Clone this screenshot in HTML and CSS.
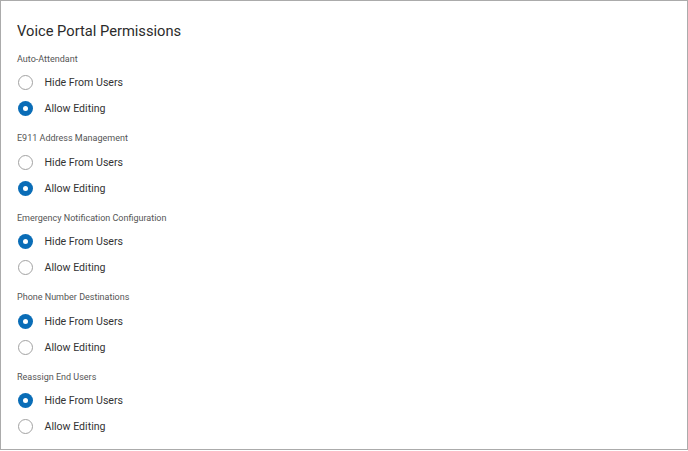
FILE: index.html
```html
<!DOCTYPE html>
<html>
<head>
<meta charset="utf-8">
<link rel="stylesheet" href="styles.css">
</head>
<body>
<div class="panel">
  <h1 class="title">Voice Portal Permissions</h1>

  <div class="section">
    <div class="label">Auto-Attendant</div>
    <div class="option"><span class="radio"></span><span class="text">Hide From Users</span></div>
    <div class="option"><span class="radio checked"></span><span class="text">Allow Editing</span></div>
  </div>

  <div class="section">
    <div class="label">E911 Address Management</div>
    <div class="option"><span class="radio"></span><span class="text">Hide From Users</span></div>
    <div class="option"><span class="radio checked"></span><span class="text">Allow Editing</span></div>
  </div>

  <div class="section">
    <div class="label">Emergency Notification Configuration</div>
    <div class="option"><span class="radio checked"></span><span class="text">Hide From Users</span></div>
    <div class="option"><span class="radio"></span><span class="text">Allow Editing</span></div>
  </div>

  <div class="section">
    <div class="label">Phone Number Destinations</div>
    <div class="option"><span class="radio checked"></span><span class="text">Hide From Users</span></div>
    <div class="option"><span class="radio"></span><span class="text">Allow Editing</span></div>
  </div>

  <div class="section">
    <div class="label">Reassign End Users</div>
    <div class="option"><span class="radio checked"></span><span class="text">Hide From Users</span></div>
    <div class="option"><span class="radio"></span><span class="text">Allow Editing</span></div>
  </div>
</div>
</body>
</html>
```

FILE: styles.css
```css
html, body {
  margin: 0;
  padding: 0;
  background: #ffffff;
}

.panel {
  box-sizing: border-box;
  width: 688px;
  height: 450px;
  border: 1px solid #ababab;
  padding: 18px 16px 0 16px;
  font-family: Roboto, "Liberation Sans", Arial, sans-serif;
  overflow: hidden;
}

.title {
  margin: 0 0 4.5px 0;
  height: 24px;
  line-height: 24px;
  font-size: 14.7px;
  font-weight: 400;
  color: #2b2b2b;
}

.section {
  padding-bottom: 5.6px;
}

.label {
  height: 22px;
  line-height: 22px;
  font-size: 9px;
  color: #555555;
}

.option {
  display: flex;
  align-items: center;
  height: 26px;
}

.radio {
  box-sizing: border-box;
  width: 15px;
  height: 15px;
  border-radius: 50%;
  border: 1px solid #a2a2a2;
  background: #ffffff;
  margin-left: 0.5px;
  flex: none;
  position: relative;
}

.radio.checked {
  border: none;
  background: #0a6db7;
}

.radio.checked::after {
  content: "";
  position: absolute;
  left: 5px;
  top: 5px;
  width: 5px;
  height: 5px;
  border-radius: 50%;
  background: #ffffff;
}

.text {
  margin-left: 12px;
  font-size: 10.6px;
  color: #333333;
}
```
